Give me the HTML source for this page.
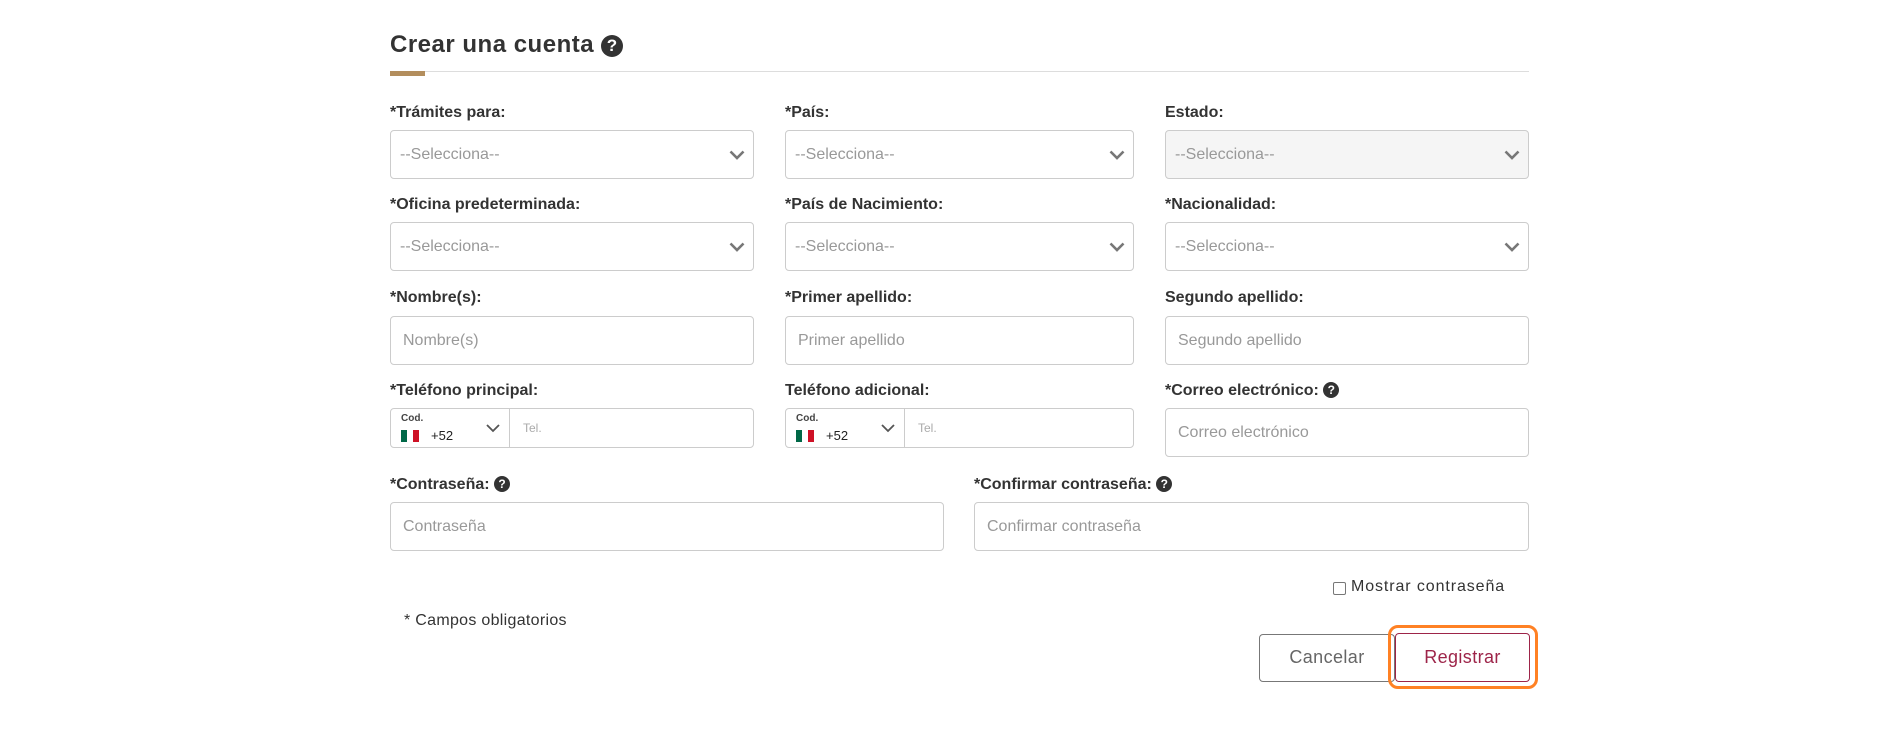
<!DOCTYPE html>
<html><head><meta charset="utf-8"><style>
*{box-sizing:border-box;margin:0;padding:0}
body{width:1882px;height:734px;background:#fff;font-family:"Liberation Sans",sans-serif;color:#333;position:relative;overflow:hidden}
.a{position:absolute}
.t{left:390px;top:31px;font-size:24px;color:#333;font-weight:bold;letter-spacing:0.5px}
.q{display:inline-block;width:22px;height:22px;border-radius:50%;background:#333;color:#fff;font-size:17px;font-weight:bold;text-align:center;line-height:22px;vertical-align:1px}
.qs{display:inline-block;width:16px;height:16px;border-radius:50%;background:#333;color:#fff;font-size:12px;font-weight:bold;text-align:center;line-height:16px;vertical-align:1px}
.l{font-size:16px;font-weight:bold;color:#333}
.b{border:1px solid #ccc;border-radius:4px;background:#fff;font-size:16px;color:#999;padding-left:12px;display:flex;align-items:center}
.s{padding-left:9px}
.dis{background:#f5f5f5}
.ch{position:absolute;right:8px;top:50%;margin-top:-6px}
</style></head><body>
<div class="a t">Crear una cuenta <span class="q">?</span></div>
<div class="a" style="left:390px;top:71px;width:1139px;height:1px;background:#ddd"></div>
<div class="a" style="left:390px;top:71px;width:35px;height:5px;background:#b38e5d"></div>

<div class="a l" style="left:390px;top:104px">*Trámites para:</div>
<div class="a l" style="left:785px;top:104px">*País:</div>
<div class="a l" style="left:1165px;top:104px">Estado:</div>
<div class="a b s" style="left:390px;top:130px;width:364px;height:49px">--Selecciona--<svg class="ch" width="16" height="12"><path d="M1.5 2.5l6.5 6.5 6.5-6.5" stroke="#777" stroke-width="2.6" fill="none"/></svg></div>
<div class="a b s" style="left:785px;top:130px;width:349px;height:49px">--Selecciona--<svg class="ch" width="16" height="12"><path d="M1.5 2.5l6.5 6.5 6.5-6.5" stroke="#777" stroke-width="2.6" fill="none"/></svg></div>
<div class="a b s dis" style="left:1165px;top:130px;width:364px;height:49px">--Selecciona--<svg class="ch" width="16" height="12"><path d="M1.5 2.5l6.5 6.5 6.5-6.5" stroke="#777" stroke-width="2.6" fill="none"/></svg></div>

<div class="a l" style="left:390px;top:196px">*Oficina predeterminada:</div>
<div class="a l" style="left:785px;top:196px">*País de Nacimiento:</div>
<div class="a l" style="left:1165px;top:196px">*Nacionalidad:</div>
<div class="a b s" style="left:390px;top:222px;width:364px;height:49px">--Selecciona--<svg class="ch" width="16" height="12"><path d="M1.5 2.5l6.5 6.5 6.5-6.5" stroke="#777" stroke-width="2.6" fill="none"/></svg></div>
<div class="a b s" style="left:785px;top:222px;width:349px;height:49px">--Selecciona--<svg class="ch" width="16" height="12"><path d="M1.5 2.5l6.5 6.5 6.5-6.5" stroke="#777" stroke-width="2.6" fill="none"/></svg></div>
<div class="a b s" style="left:1165px;top:222px;width:364px;height:49px">--Selecciona--<svg class="ch" width="16" height="12"><path d="M1.5 2.5l6.5 6.5 6.5-6.5" stroke="#777" stroke-width="2.6" fill="none"/></svg></div>

<div class="a l" style="left:390px;top:289px">*Nombre(s):</div>
<div class="a l" style="left:785px;top:289px">*Primer apellido:</div>
<div class="a l" style="left:1165px;top:289px">Segundo apellido:</div>
<div class="a b" style="left:390px;top:316px;width:364px;height:49px">Nombre(s)</div>
<div class="a b" style="left:785px;top:316px;width:349px;height:49px">Primer apellido</div>
<div class="a b" style="left:1165px;top:316px;width:364px;height:49px">Segundo apellido</div>

<div class="a l" style="left:390px;top:382px">*Teléfono principal:</div>
<div class="a l" style="left:785px;top:382px">Teléfono adicional:</div>
<div class="a l" style="left:1165px;top:382px">*Correo electrónico: <span class="qs">?</span></div>

<div class="a" style="left:390px;top:408px;width:364px;height:40px;border:1px solid #ccc;border-radius:4px">
 <div class="a" style="left:10px;top:4px;font-size:10px;font-weight:bold;color:#444">Cod.</div>
 <div class="a" style="left:10px;top:21px;width:18px;height:12px;background:linear-gradient(90deg,#006847 33%,#fff 33% 66%,#ce1126 66%)"></div>
 <div class="a" style="left:40px;top:19px;font-size:13px;color:#222">+52</div>
 <svg class="a" style="left:95px;top:14px" width="14" height="10"><path d="M1 2l6 6 6-6" stroke="#555" stroke-width="1.8" fill="none"/></svg>
 <div class="a" style="left:118px;top:0;width:1px;height:38px;background:#ccc"></div>
 <div class="a" style="left:132px;top:12px;font-size:12px;color:#aaa">Tel.</div>
</div>
<div class="a" style="left:785px;top:408px;width:349px;height:40px;border:1px solid #ccc;border-radius:4px">
 <div class="a" style="left:10px;top:4px;font-size:10px;font-weight:bold;color:#444">Cod.</div>
 <div class="a" style="left:10px;top:21px;width:18px;height:12px;background:linear-gradient(90deg,#006847 33%,#fff 33% 66%,#ce1126 66%)"></div>
 <div class="a" style="left:40px;top:19px;font-size:13px;color:#222">+52</div>
 <svg class="a" style="left:95px;top:14px" width="14" height="10"><path d="M1 2l6 6 6-6" stroke="#555" stroke-width="1.8" fill="none"/></svg>
 <div class="a" style="left:118px;top:0;width:1px;height:38px;background:#ccc"></div>
 <div class="a" style="left:132px;top:12px;font-size:12px;color:#aaa">Tel.</div>
</div>
<div class="a b" style="left:1165px;top:408px;width:364px;height:49px">Correo electrónico</div>

<div class="a l" style="left:390px;top:476px">*Contraseña: <span class="qs">?</span></div>
<div class="a l" style="left:974px;top:476px">*Confirmar contraseña: <span class="qs">?</span></div>
<div class="a b" style="left:390px;top:502px;width:554px;height:49px">Contraseña</div>
<div class="a b" style="left:974px;top:502px;width:555px;height:49px">Confirmar contraseña</div>

<div class="a" style="left:1333px;top:582px;width:13px;height:13px;border:1.5px solid #777;border-radius:2px"></div>
<div class="a" style="left:1351px;top:578px;font-size:16px;color:#333;letter-spacing:0.9px">Mostrar contraseña</div>
<div class="a" style="left:404px;top:612px;font-size:16px;color:#333;letter-spacing:0.3px">* Campos obligatorios</div>

<div class="a" style="left:1259px;top:634px;width:136px;height:48px;border:1.5px solid #777;border-radius:4px;font-size:18px;color:#666;text-align:center;line-height:45px;letter-spacing:0.4px">Cancelar</div>
<div class="a" style="left:1388px;top:625px;width:150px;height:64px;border:3px solid #ff8124;border-radius:10px"></div>
<div class="a" style="left:1395px;top:633px;width:135px;height:49px;border:1.5px solid #9d2449;border-radius:4px;font-size:18px;color:#9d2449;text-align:center;line-height:46px;letter-spacing:0.4px">Registrar</div>
</body></html>
